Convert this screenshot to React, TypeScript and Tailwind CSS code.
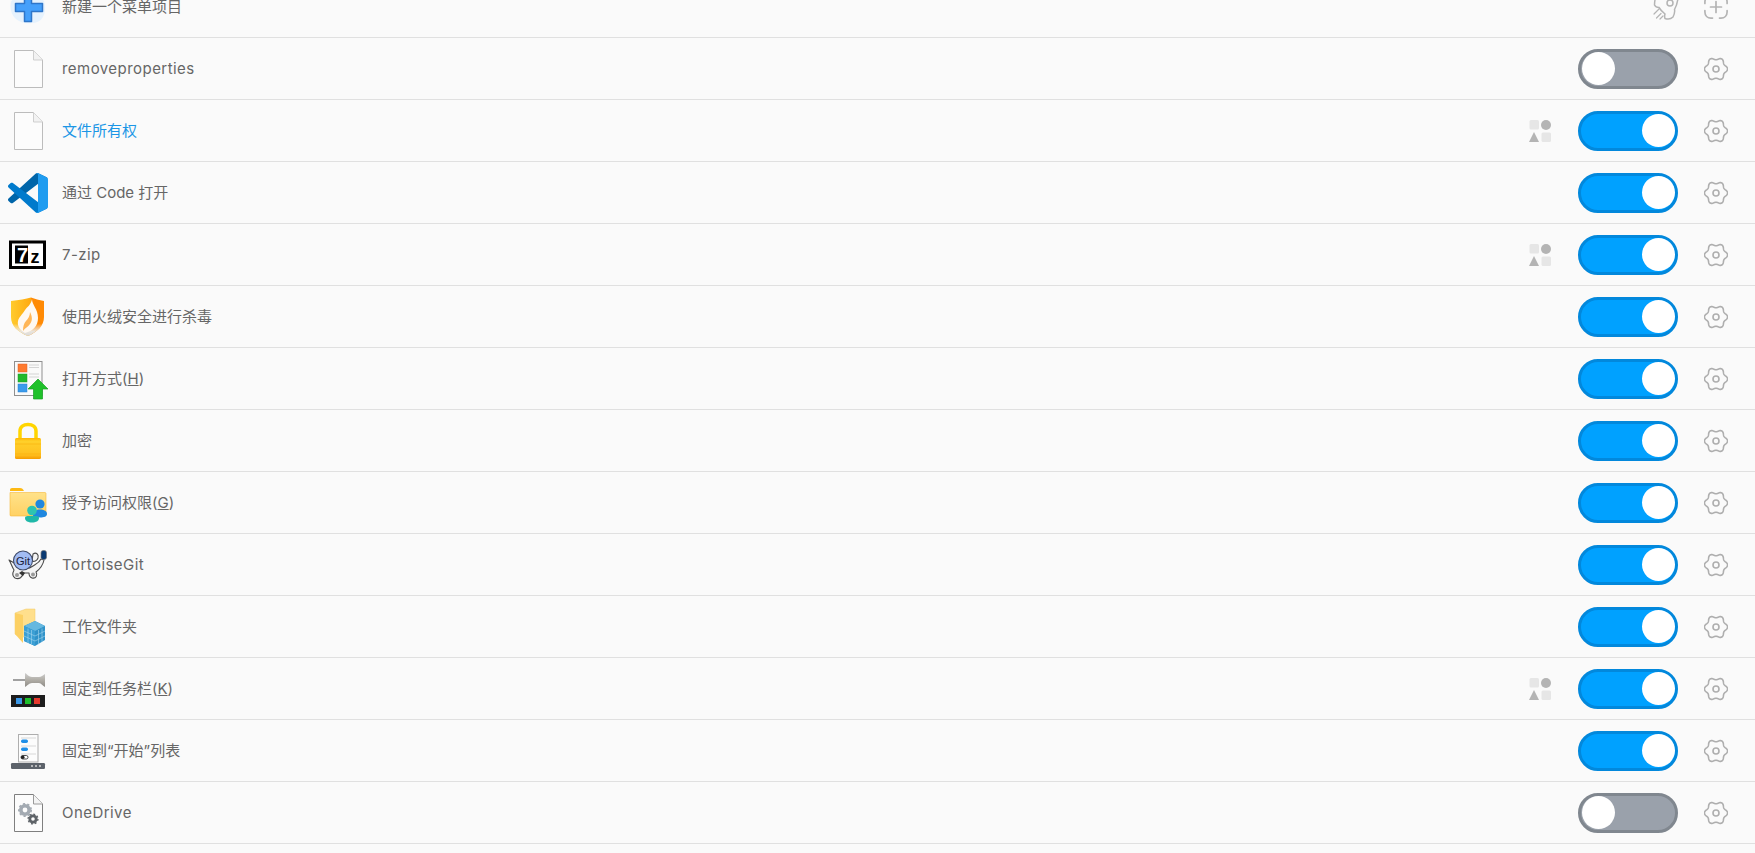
import type { ReactNode } from 'react';

const gearPath = (() => {
  const pts: string[] = [];
  for (let i = 0; i < 120; i++) {
    const a = (i / 120) * Math.PI * 2;
    const r = 10.4 + 1.2 * Math.cos(6 * a);
    pts.push(`${(12 + r * Math.cos(a)).toFixed(2)} ${(12 + r * Math.sin(a)).toFixed(2)}`);
  }
  return `M${pts.join('L')}Z`;
})();

function Gear() {
  return (
    <svg width='24' height='24' viewBox='0 0 24 24' fill='none' stroke='#aeaeae' strokeWidth='1.6'>
      <path d={gearPath} strokeLinejoin='round' />
      <circle cx='12' cy='12' r='3' />
    </svg>
  );
}

function Shapes() {
  return (
    <svg width='22' height='22' viewBox='0 0 22 22'>
      <rect x='0.5' y='0' width='9.5' height='9.5' rx='1.5' fill='#e6e6e6' />
      <circle cx='17' cy='5' r='5' fill='#b4b4b4' />
      <path d='M0 22 L5 12 L10 22Z' fill='#b4b4b4' />
      <rect x='12.5' y='12.5' width='9.5' height='9.5' rx='1.5' fill='#e6e6e6' />
    </svg>
  );
}

function Toggle({ on }: { on: boolean }) {
  return (
    <div
      className={`flex h-10 w-[100px] items-center rounded-full border-[3px] ${
        on ? 'justify-end border-[#0288dc] bg-[#00a1ff]' : 'justify-start border-[#80878f] bg-[#9aa1ab] pl-[1px]'
      }`}
    >
      <div className='h-[33px] w-[33px] rounded-full bg-white' />
    </div>
  );
}

function Ico({ children }: { children: ReactNode }) {
  return (
    <svg width='40' height='40' viewBox='0 0 40 40' className='overflow-visible'>
      {children}
    </svg>
  );
}

function FileIco() {
  return (
    <Ico>
      <path d='M6.5 1.5H25.5L34.5 11V38.5H6.5Z' fill='#fcfcfc' stroke='#bcbcbc' />
      <path d='M25.5 1.5V11H34.5' fill='#f2f2f2' stroke='#cfcfcf' />
    </Ico>
  );
}

function PlusIco() {
  return (
    <Ico>
      <path d='M3 15C10 3 28 6 36 14C39 24 36 36 24 36C12 38 0 30 3 15Z' fill='#e6f2fd' />
      <path
        d='M16.5 3.5H23.5V16.5H34.5V24.5H23.5V34.5H16.5V24.5H7.5V16.5H16.5Z'
        fill='#45a0fb'
        stroke='#2f76c9'
        strokeWidth='1.5'
        strokeLinejoin='round'
      />
    </Ico>
  );
}

function CodeIco() {
  return (
    <svg width='40' height='40' viewBox='0 0 100 100'>
      <path
        d='M96.4614 10.7962L75.8569 0.875542C73.4719 -0.272773 70.6217 0.211611 68.75 2.08333L1.29858 63.5832C-0.515693 65.2373 -0.513607 68.0937 1.30308 69.7452L6.81272 74.754C8.29793 76.1042 10.5347 76.2036 12.1338 74.9905L93.3609 13.3699C96.086 11.3026 100 13.2462 100 16.6667V16.4275C100 14.0265 98.6246 11.8378 96.4614 10.7962Z'
        fill='#0065a9'
      />
      <path
        d='M96.4614 89.2038L75.8569 99.1245C73.4719 100.273 70.6217 99.7884 68.75 97.9167L1.29858 36.4168C-0.515693 34.7627 -0.513607 31.9063 1.30308 30.2548L6.81272 25.246C8.29793 23.8958 10.5347 23.7964 12.1338 25.0095L93.3609 86.6301C96.086 88.6974 100 86.7538 100 83.3333V83.5725C100 85.9735 98.6246 88.1622 96.4614 89.2038Z'
        fill='#007acc'
      />
      <path
        d='M75.8578 99.1263C73.4721 100.274 70.6219 99.7885 68.75 97.9166C71.0564 100.223 75 98.5895 75 95.3278V4.67213C75 1.41039 71.0564 -0.223106 68.75 2.08329C70.6219 0.211402 73.4721 -0.273666 75.8578 0.873633L96.4587 10.7807C98.6234 11.8217 100 14.0112 100 16.4132V83.5871C100 85.9891 98.6234 88.1786 96.4587 89.2196L75.8578 99.1263Z'
        fill='#1f9cf0'
      />
    </svg>
  );
}

function ZipIco() {
  return (
    <Ico>
      <rect x='2.5' y='7' width='34' height='25.5' fill='#fff' stroke='#000' strokeWidth='3' />
      <rect x='7' y='10.5' width='13' height='18' fill='#000' />
      <text x='9' y='26.5' fontSize='20' fontWeight='700' fill='#fff' fontFamily='Liberation Sans, sans-serif'>
        7
      </text>
      <text x='22.5' y='28' fontSize='18' fontWeight='700' fill='#000' fontFamily='Liberation Sans, sans-serif'>
        z
      </text>
    </Ico>
  );
}

function ShieldIco() {
  return (
    <Ico>
      <defs>
        <linearGradient id='sh' x1='0' y1='0' x2='1' y2='0'>
          <stop offset='0' stopColor='#ffcb2e' />
          <stop offset='0.6' stopColor='#ffa90f' />
          <stop offset='0.61' stopColor='#ff8a05' />
          <stop offset='1' stopColor='#ff8a05' />
        </linearGradient>
        <linearGradient id='sh2' x1='0' y1='0' x2='0' y2='1'>
          <stop offset='0' stopColor='#ffffff' stopOpacity='0' />
          <stop offset='0.68' stopColor='#ffffff' stopOpacity='0' />
          <stop offset='0.88' stopColor='#e9e4dc' stopOpacity='1' />
          <stop offset='1' stopColor='#d9d9d9' stopOpacity='1' />
        </linearGradient>
      </defs>
      <path d='M3 4C11 3 18 2 23 0.5C27 2 31 3 36 4V20C36 29 29 35 20 39C10 35 3 29 3 20Z' fill='url(#sh)' />
      <path d='M3 4C11 3 18 2 23 0.5C27 2 31 3 36 4V20C36 29 29 35 20 39C10 35 3 29 3 20Z' fill='url(#sh2)' />
      <path
        d='M24 2C24 8 30 12 30 21C30 29 25 34 17 36C12 33 9 29 10 24C11 20 14 18 17 13C19 10 23 8 24 2Z'
        fill='#fff9f2'
      />
      <path d='M22 15C24 19 25 23 22 27C20 30 17 31 15 34C15 29 16 26 18 24C20 22 22 19 22 15Z' fill='#ffb657' />
    </Ico>
  );
}

function OpenWithIco() {
  return (
    <Ico>
      <rect x='6.5' y='2.5' width='27.5' height='34' fill='#fafafa' stroke='#8f8f8f' />
      <rect x='10' y='5' width='9' height='8' fill='#ff7a2f' stroke='#e0602a' strokeWidth='0.5' />
      <rect x='10' y='15' width='9' height='8' fill='#21b92c' stroke='#1a9d25' strokeWidth='0.5' />
      <rect x='10' y='25' width='9' height='8' fill='#3a9bec' stroke='#2980d0' strokeWidth='0.5' />
      <path d='M21 6H31M21 8.5H31M21 15H31M21 18H31' stroke='#d4d4d4' />
      <path d='M30 20L40 30H34.5V40H25.5V30H20Z' fill='#1fc12a' stroke='#17a022' strokeWidth='0.7' />
    </Ico>
  );
}

function LockIco() {
  return (
    <Ico>
      <defs>
        <linearGradient id='lk' x1='0' y1='0' x2='0' y2='1'>
          <stop offset='0' stopColor='#ffb400' />
          <stop offset='0.15' stopColor='#ffd02a' />
          <stop offset='0.8' stopColor='#ffc020' />
          <stop offset='1' stopColor='#f59b00' />
        </linearGradient>
      </defs>
      <path d='M12 18V10C12 5.5 15.5 3.5 20 3.5C24.5 3.5 28 5.5 28 10V18' fill='none' stroke='#ffd500' strokeWidth='3.5' />
      <rect x='7' y='17' width='26' height='21' rx='1.5' fill='url(#lk)' />
      <path d='M7 23H33M7 33H33' stroke='#f5a300' strokeOpacity='0.45' />
    </Ico>
  );
}

function GrantIco() {
  return (
    <Ico>
      <defs>
        <linearGradient id='fd' x1='0' y1='0' x2='0' y2='1'>
          <stop offset='0' stopColor='#ffe28a' />
          <stop offset='1' stopColor='#ffd164' />
        </linearGradient>
      </defs>
      <path d='M2 7C2 5.8 2.8 5 4 5H12C14 5 15 6 16 8H2Z' fill='#fdb913' />
      <path d='M2 9.5H37C37.6 9.5 38 10 38 10.5V32C38 32.6 37.6 33 37 33H3C2.4 33 2 32.6 2 32Z' fill='url(#fd)' stroke='#f6b83b' strokeWidth='0.6' />
      <circle cx='32' cy='21' r='4.6' fill='#1f87df' />
      <path d='M25 33C25 28 28 26.5 32 26.5C36 26.5 39 28 39 31C39 33.5 36 34.5 32 34.5Z' fill='#1f87df' />
      <circle cx='24' cy='27.5' r='4.8' fill='#2ec4b0' />
      <path d='M17 35C17 33 19 33 24 33C29 33 31 33 31 35C31 38 28 39.5 24 39.5C20 39.5 17 38 17 35Z' fill='#1fb8a8' />
    </Ico>
  );
}

function TortoiseIco() {
  return (
    <Ico>
      <path
        d='M1 15L8 19C12 24 20 25 25 21C28 19 31 18 33 14L36 15C35 20 32 24 28 27C30 30 28 34 24 33C21 32 21 29 21 28H15C15 32 11 35 7 33C4 31 5 27 6 25C4 22 3 18 1 15Z'
        fill='#f4f4f4'
        stroke='#4a4a4a'
        strokeWidth='1.1'
        strokeLinejoin='round'
      />
      <path d='M25 9C28 7 31 9 30 13C29 16 26 17 24 16Z' fill='#f4f4f4' stroke='#4a4a4a' strokeWidth='1.1' />
      <circle cx='15' cy='15.5' r='9.5' fill='#a2bcf4' stroke='#3f4a68' strokeWidth='1.1' />
      <text x='15' y='19.5' textAnchor='middle' fontSize='11' fill='#1a2036' fontFamily='Liberation Sans, sans-serif'>
        Git
      </text>
      <path d='M11 28L14 26L17 28L15 31Z' fill='#333' />
      <circle cx='9' cy='30' r='2' fill='#999' />
      <circle cx='25' cy='29.5' r='2' fill='#999' />
      <rect x='33' y='5.5' width='5.5' height='9' rx='2.2' fill='#0b3a72' stroke='#777' strokeWidth='0.7' />
    </Ico>
  );
}

function WorkIco() {
  return (
    <Ico>
      <path d='M7 6L18 2H27V30H12L7 27Z' fill='#ffdf8c' stroke='#f0c866' strokeWidth='0.5' />
      <path d='M7 6L15 8V36L7 27Z' fill='#fcd063' />
      <path d='M27 14L37 19V33L27 39L16 34V19Z' fill='#2f92c9' />
      <path d='M27 14L37 19L27 24L16 19Z' fill='#66b8e0' />
      <path d='M27 24V39L16 34V19Z' fill='#3b9fd4' />
      <path
        d='M20 21.5V36M23.5 23V37.5M30.5 23V37.5M34 21.5V35M16 24L27 29L37 24M16 29L27 34L37 29'
        fill='none'
        stroke='#a5d6ef'
        strokeWidth='0.6'
      />
    </Ico>
  );
}

function PinIco() {
  return (
    <Ico>
      <defs>
        <linearGradient id='pn' x1='0' y1='0' x2='0' y2='1'>
          <stop offset='0' stopColor='#cfcfcf' />
          <stop offset='0.5' stopColor='#b0ada6' />
          <stop offset='1' stopColor='#8e8b86' />
        </linearGradient>
      </defs>
      <path d='M5 11H18' stroke='#8a8a8a' strokeWidth='1.6' />
      <path d='M17 4C19 5 21 8 24 8H31C33 8 35 6 37 5V18C35 17 33 14 31 14H24C21 14 19 17 17 18Z' fill='url(#pn)' />
      <rect x='3' y='26' width='34' height='12' fill='#1d1d1d' />
      <rect x='8' y='29' width='6' height='6' fill='#3b98e8' />
      <rect x='17' y='29' width='6' height='6' fill='#1fbf2c' />
      <rect x='26' y='29' width='6' height='6' fill='#e63a2e' />
    </Ico>
  );
}

function StartIco() {
  return (
    <Ico>
      <rect x='10.5' y='3.5' width='19.5' height='27.5' fill='#fcfcfc' stroke='#aeaeae' />
      <path d='M13 7H28M13 15H28M13 23H28' stroke='#d8d8d8' />
      <rect x='13' y='8.5' width='7' height='3.5' rx='1.7' fill='#1f8fe8' />
      <rect x='13' y='16.5' width='7' height='3.5' rx='1.7' fill='#1f8fe8' />
      <rect x='13' y='24.5' width='7' height='3.5' rx='1.7' fill='#fff' stroke='#222' strokeWidth='0.8' />
      <rect x='13' y='24.5' width='3.5' height='3.5' rx='1.7' fill='#222' />
      <rect x='3' y='32' width='34' height='6' rx='1.2' fill='#5c626a' />
      <path d='M23 35H25M27 35H29M31 35H33' stroke='#d5d5d5' strokeWidth='1.6' />
    </Ico>
  );
}

function OneDriveIco() {
  return (
    <Ico>
      <path d='M6.5 1.5H25.5L34.5 11V38.5H6.5Z' fill='#fcfcfc' stroke='#7f7f7f' />
      <path d='M25.5 1.5V11H34.5' fill='#f4f4f4' stroke='#9a9a9a' />
      <circle cx='17' cy='17' r='4.2' fill='none' stroke='#a3aab2' strokeWidth='3.6' />
      <circle cx='17' cy='17' r='6.2' fill='none' stroke='#a3aab2' strokeWidth='1.6' strokeDasharray='2.2 2.2' />
      <circle cx='25' cy='26' r='3.2' fill='none' stroke='#5e6368' strokeWidth='2.8' />
      <circle cx='25' cy='26' r='4.9' fill='none' stroke='#5e6368' strokeWidth='1.4' strokeDasharray='1.9 1.9' />
    </Ico>
  );
}

function TopActions() {
  return (
    <>
      <svg
        width='26'
        height='26'
        viewBox='0 0 26 26'
        fill='none'
        stroke='#b4b4b4'
        strokeWidth='1.5'
        strokeLinecap='round'
        className='mr-[25px] overflow-visible'
      >
        <path d='M4 0C2.5 3 1.5 6 1.5 11C2.5 13 4 13.5 6 13.5C7.5 16 9.5 18 12 20C11.5 21.5 11.5 23 12 24.5C15 25.5 18 25 20 23C21.5 20 22 17.5 21.5 15.5C24 11 25.5 5 25 -2' />
        <circle cx='17' cy='9' r='3' />
        <path d='M1 20L6 15M3.5 24L8 19.5M7 25L10 22' strokeWidth='1.2' />
      </svg>
      <svg width='24' height='24' viewBox='0 0 24 24' fill='none' stroke='#b4b4b4' strokeWidth='1.7' strokeLinecap='round'>
        <path d='M0.9 15.5V17C0.9 20.5 3.5 23.1 7 23.1H8.5M23.1 15.5V17C23.1 20.5 20.5 23.1 17 23.1H15.5' />
        <path d='M0.9 8.5V7C0.9 3.5 3.5 0.9 7 0.9H8.5M23.1 8.5V7C23.1 3.5 20.5 0.9 17 0.9H15.5' />
        <path d='M12 6.5V17.5M6.5 12H17.5' />
      </svg>
    </>
  );
}

const rows: {
  icon: ReactNode;
  label: ReactNode;
  blue?: boolean;
  latin?: boolean;
  shapes?: boolean;
  on?: boolean;
}[] = [
  { icon: <FileIco />, label: 'removeproperties', latin: true, on: false },
  { icon: <FileIco />, label: '文件所有权', blue: true, shapes: true, on: true },
  { icon: <CodeIco />, label: '通过 Code 打开', on: true },
  { icon: <ZipIco />, label: '7-zip', latin: true, shapes: true, on: true },
  { icon: <ShieldIco />, label: '使用火绒安全进行杀毒', on: true },
  { icon: <OpenWithIco />, label: <>打开方式(<u>H</u>)</>, on: true },
  { icon: <LockIco />, label: '加密', on: true },
  { icon: <GrantIco />, label: <>授予访问权限(<u>G</u>)</>, on: true },
  { icon: <TortoiseIco />, label: 'TortoiseGit', latin: true, on: true },
  { icon: <WorkIco />, label: '工作文件夹', on: true },
  { icon: <PinIco />, label: <>固定到任务栏(<u>K</u>)</>, shapes: true, on: true },
  { icon: <StartIco />, label: '固定到“开始”列表', on: true },
  { icon: <OneDriveIco />, label: 'OneDrive', latin: true, on: false },
];

export default function App() {
  return (
    <div className="h-screen overflow-hidden bg-[#fafafa] font-['Inter','Noto_Sans_CJK_SC',sans-serif] text-[15px] text-[#666]">
      <div className='-mt-[24px]'>
        {/* top row is cut off by the scroll position */}
        <div className='flex h-[62px] items-center border-b border-[#e0e0e0] pl-2 pr-[27px]'>
          <div className='mr-[14px] h-10 w-10'>
            <PlusIco />
          </div>
          <span className='flex-1 pt-[2px]'>新建一个菜单项目</span>
          <TopActions />
        </div>
        {rows.map((row, i) => (
          <div key={i} className='flex h-[62px] items-center border-b border-[#e0e0e0] pl-2 pr-[27px]'>
            <div className='mr-[14px] h-10 w-10'>{row.icon}</div>
            <span
              className={`flex-1 pt-[2px] ${row.blue ? 'text-[#1b96e6]' : ''} ${row.latin ? 'tracking-[0.45px]' : ''}`}
            >
              {row.label}
            </span>
            {row.shapes && (
              <div className='mr-[27px] h-[22px]'>
                <Shapes />
              </div>
            )}
            <Toggle on={!!row.on} />
            <div className='ml-[26px] h-6'>
              <Gear />
            </div>
          </div>
        ))}
      </div>
    </div>
  );
}
